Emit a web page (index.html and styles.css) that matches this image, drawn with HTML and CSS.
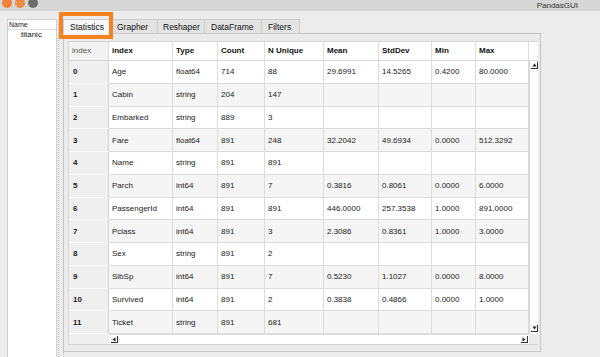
FILE: index.html
```html
<!DOCTYPE html>
<html>
<head>
<meta charset="utf-8">
<link rel="stylesheet" href="styles.css">
</head>
<body>
<div class="window">
  <div class="titlebar">
    <div class="lights">
      <span class="light l1"></span>
      <span class="light l2"></span>
      <span class="light l3"></span>
    </div>
    <div class="title">PandasGUI</div>
  </div>
  <div class="main">
    <div class="sidebar">
      <div class="side-head">Name</div>
      <div class="side-item">titanic</div>
    </div>
    <div class="splitter"></div>
    <div class="tabwidget">
      <div class="tabbar">
        <div class="tab active">Statistics</div>
        <div class="tab">Grapher</div>
        <div class="tab">Reshaper</div>
        <div class="tab">DataFrame</div>
        <div class="tab">Filters</div>
      </div>
      <div class="highlight"></div>
      <div class="pane">
        <div class="frame">
          <div class="thead">
            <div class="corner">index</div>
            <div class="th">index</div>
            <div class="th">Type</div>
            <div class="th">Count</div>
            <div class="th">N Unique</div>
            <div class="th">Mean</div>
            <div class="th">StdDev</div>
            <div class="th">Min</div>
            <div class="th">Max</div>
          </div>
          <div class="topcorner"></div>
          <div class="tbody">
            <div class="row"><div class="rh">0</div><div class="td">Age</div><div class="td">float64</div><div class="td">714</div><div class="td">88</div><div class="td">29.6991</div><div class="td">14.5265</div><div class="td">0.4200</div><div class="td">80.0000</div></div>
            <div class="row alt"><div class="rh">1</div><div class="td">Cabin</div><div class="td">string</div><div class="td">204</div><div class="td">147</div><div class="td"></div><div class="td"></div><div class="td"></div><div class="td"></div></div>
            <div class="row"><div class="rh">2</div><div class="td">Embarked</div><div class="td">string</div><div class="td">889</div><div class="td">3</div><div class="td"></div><div class="td"></div><div class="td"></div><div class="td"></div></div>
            <div class="row alt"><div class="rh">3</div><div class="td">Fare</div><div class="td">float64</div><div class="td">891</div><div class="td">248</div><div class="td">32.2042</div><div class="td">49.6934</div><div class="td">0.0000</div><div class="td">512.3292</div></div>
            <div class="row"><div class="rh">4</div><div class="td">Name</div><div class="td">string</div><div class="td">891</div><div class="td">891</div><div class="td"></div><div class="td"></div><div class="td"></div><div class="td"></div></div>
            <div class="row alt"><div class="rh">5</div><div class="td">Parch</div><div class="td">int64</div><div class="td">891</div><div class="td">7</div><div class="td">0.3816</div><div class="td">0.8061</div><div class="td">0.0000</div><div class="td">6.0000</div></div>
            <div class="row"><div class="rh">6</div><div class="td">PassengerId</div><div class="td">int64</div><div class="td">891</div><div class="td">891</div><div class="td">446.0000</div><div class="td">257.3538</div><div class="td">1.0000</div><div class="td">891.0000</div></div>
            <div class="row alt"><div class="rh">7</div><div class="td">Pclass</div><div class="td">int64</div><div class="td">891</div><div class="td">3</div><div class="td">2.3086</div><div class="td">0.8361</div><div class="td">1.0000</div><div class="td">3.0000</div></div>
            <div class="row"><div class="rh">8</div><div class="td">Sex</div><div class="td">string</div><div class="td">891</div><div class="td">2</div><div class="td"></div><div class="td"></div><div class="td"></div><div class="td"></div></div>
            <div class="row alt"><div class="rh">9</div><div class="td">SibSp</div><div class="td">int64</div><div class="td">891</div><div class="td">7</div><div class="td">0.5230</div><div class="td">1.1027</div><div class="td">0.0000</div><div class="td">8.0000</div></div>
            <div class="row"><div class="rh">10</div><div class="td">Survived</div><div class="td">int64</div><div class="td">891</div><div class="td">2</div><div class="td">0.3838</div><div class="td">0.4866</div><div class="td">0.0000</div><div class="td">1.0000</div></div>
            <div class="row alt"><div class="rh">11</div><div class="td">Ticket</div><div class="td">string</div><div class="td">891</div><div class="td">681</div><div class="td"></div><div class="td"></div><div class="td"></div><div class="td"></div></div>
          </div>
          <div class="vscroll">
            <div class="arrow"><svg width="5" height="4" viewBox="0 0 5 4"><path d="M2.5 0.5 L4.5 3.5 L0.5 3.5 Z" fill="#222"/></svg></div>
            <div class="arrow"><svg width="5" height="4" viewBox="0 0 5 4"><path d="M0.5 0.5 L4.5 0.5 L2.5 3.5 Z" fill="#222"/></svg></div>
          </div>
          <div class="hscroll">
            <div class="hgap"></div>
            <div class="hbar">
              <div class="arrow"><svg width="4" height="5" viewBox="0 0 4 5"><path d="M0.5 2.5 L3.5 0.5 L3.5 4.5 Z" fill="#222"/></svg></div>
              <div class="arrow"><svg width="4" height="5" viewBox="0 0 4 5"><path d="M0.5 0.5 L3.5 2.5 L0.5 4.5 Z" fill="#222"/></svg></div>
            </div>
          </div>
          <div class="bcorner"></div>
        </div>
      </div>
    </div>
  </div>
</div>
</body>
</html>
```
FILE: styles.css
```css
* { box-sizing: border-box; }
html, body { margin: 0; padding: 0; }
body {
  width: 600px;
  height: 357px;
  overflow: hidden;
  background: #ececec;
  font-family: "Liberation Sans", Arial, sans-serif;
  color: #1a1a1a;
}
.window {
  width: 600px;
  height: 357px;
  display: flex;
  flex-direction: column;
}
.titlebar {
  height: 11px;
  background: #d6d6d6;
  display: flex;
  align-items: flex-start;
  justify-content: space-between;
  overflow: hidden;
  flex: none;
}
.lights {
  display: flex;
  gap: 3px;
  padding-left: 2px;
  margin-top: -2px;
}
.light {
  width: 10px;
  height: 10px;
  border-radius: 50%;
  display: block;
}
.l1 { background: #f0803a; }
.l2 {
  background-color: #ee8438;
  background-image: radial-gradient(circle, #f8c79a 35%, transparent 40%);
  background-size: 3px 3px;
}
.l3 { background: #6b6b6b; }
.title {
  font-size: 8px;
  line-height: 11px;
  color: #333;
  padding-right: 22px;
}
.main {
  flex: 1;
  display: flex;
  min-height: 0;
}
.sidebar {
  margin-left: 7px;
  margin-top: 8px;
  width: 50px;
  background: #fff;
  border: 1px solid #cfcfcf;
  border-bottom: none;
}
.side-head {
  font-size: 7px;
  line-height: 8px;
  height: 9px;
  padding-left: 1px;
  color: #222;
  border-bottom: 1px solid #e0e0e0;
  margin-top: 1px;
}
.side-item {
  font-size: 8px;
  line-height: 10px;
  padding-left: 13px;
  color: #111;
}
.splitter {
  width: 6px;
  border-left: 1px dotted #c4c4c4;
  border-right: 1px dotted #c4c4c4;
  margin-left: 1px;
  margin-right: -1px;
  margin-top: 8px;
}
.tabwidget {
  width: 478px;
  display: flex;
  flex-direction: column;
  position: relative;
  padding-bottom: 5px;
}
.tabbar {
  display: flex;
  height: 15px;
  margin-top: 8px;
  position: relative;
  z-index: 1;
  margin-bottom: -1px;
}
.tab {
  font-size: 8.5px;
  line-height: 14px;
  padding: 0 6px;
  background: #e3e3e3;
  border: 1px solid #cbcbcb;
  border-left: none;
  color: #111;
}
.tab:nth-child(2) { width: 46px; padding-left: 5px; }
.tab:nth-child(3) { width: 47px; padding-left: 5px; }
.tab:nth-child(4) { width: 57px; padding-left: 6px; }
.tab:nth-child(5) { width: 38px; padding-left: 6px; }
.tab.active {
  width: 49px;
  background: #f6f6f6;
  border-left: 1px solid #cbcbcb;
  border-bottom-color: #f6f6f6;
  padding-left: 6px;
}
.highlight {
  position: absolute;
  left: -4px;
  top: 1px;
  width: 54px;
  height: 27px;
  border: 4.5px solid #f5821f;
  z-index: 2;
}
.pane {
  flex: 1;
  border: 1px solid #c6c6c6;
  background: #ebebeb;
  padding: 7px 2px 5px 4px;
}
.frame {
  width: 470px;
  height: 304px;
  background: #fff;
  border: 1px solid #d4d4d4;
  display: grid;
  grid-template-columns: 460px 9px;
  grid-template-rows: 19px 273px 10px;
}
.thead, .row {
  display: grid;
  grid-template-columns: 40px 64px 45px 47px 59px 55px 53px 44px 53px;
}
.thead {
  border-bottom: 1px solid #d6d6d6;
}
.thead > div {
  font-size: 8px;
  line-height: 18px;
  padding-left: 3px;
  border-right: 1px solid #dcdcdc;
  white-space: nowrap;
  overflow: hidden;
}
.corner {
  color: #555;
  background: #f2f2f2;
}
.th {
  font-weight: bold;
  color: #111;
}
.topcorner { background: #fff; border-bottom: 1px solid #d6d6d6; }
.tbody {
  display: grid;
  grid-template-rows: repeat(12, 22.75px);
}
.row > div {
  font-size: 8px;
  display: flex;
  align-items: center;
  padding-left: 3px;
  border-right: 1px solid #dcdcdc;
  border-bottom: 1px solid #dcdcdc;
  white-space: nowrap;
  overflow: hidden;
}
.row.alt > .td { background: #f5f5f5; }
.rh {
  font-weight: bold;
  background: #efefef;
  border-right: 1px solid #d2d2d2 !important;
  border-bottom: 1px solid #fafafa !important;
  padding-left: 4px !important;
}
.vscroll {
  display: flex;
  flex-direction: column;
  justify-content: space-between;
  align-items: flex-end;
  padding: 1px 0 2px;
  background: #fff;
  border-left: 1px solid #d4d4d4;
}
.arrow {
  width: 7px;
  height: 7px;
  background: #f8f8f8;
  border-right: 1.5px solid #333;
  border-bottom: 1.5px solid #333;
  display: flex;
  align-items: center;
  justify-content: center;
}
.hscroll {
  display: flex;
}
.hgap {
  width: 40px;
  background: #efefef;
}
.hbar {
  flex: 1;
  display: flex;
  justify-content: space-between;
  padding: 1px 1px 1px 2px;
  background: #fff;
  border-top: 1px solid #dcdcdc;
}
.bcorner {
  background: #ebebeb;
}
```
